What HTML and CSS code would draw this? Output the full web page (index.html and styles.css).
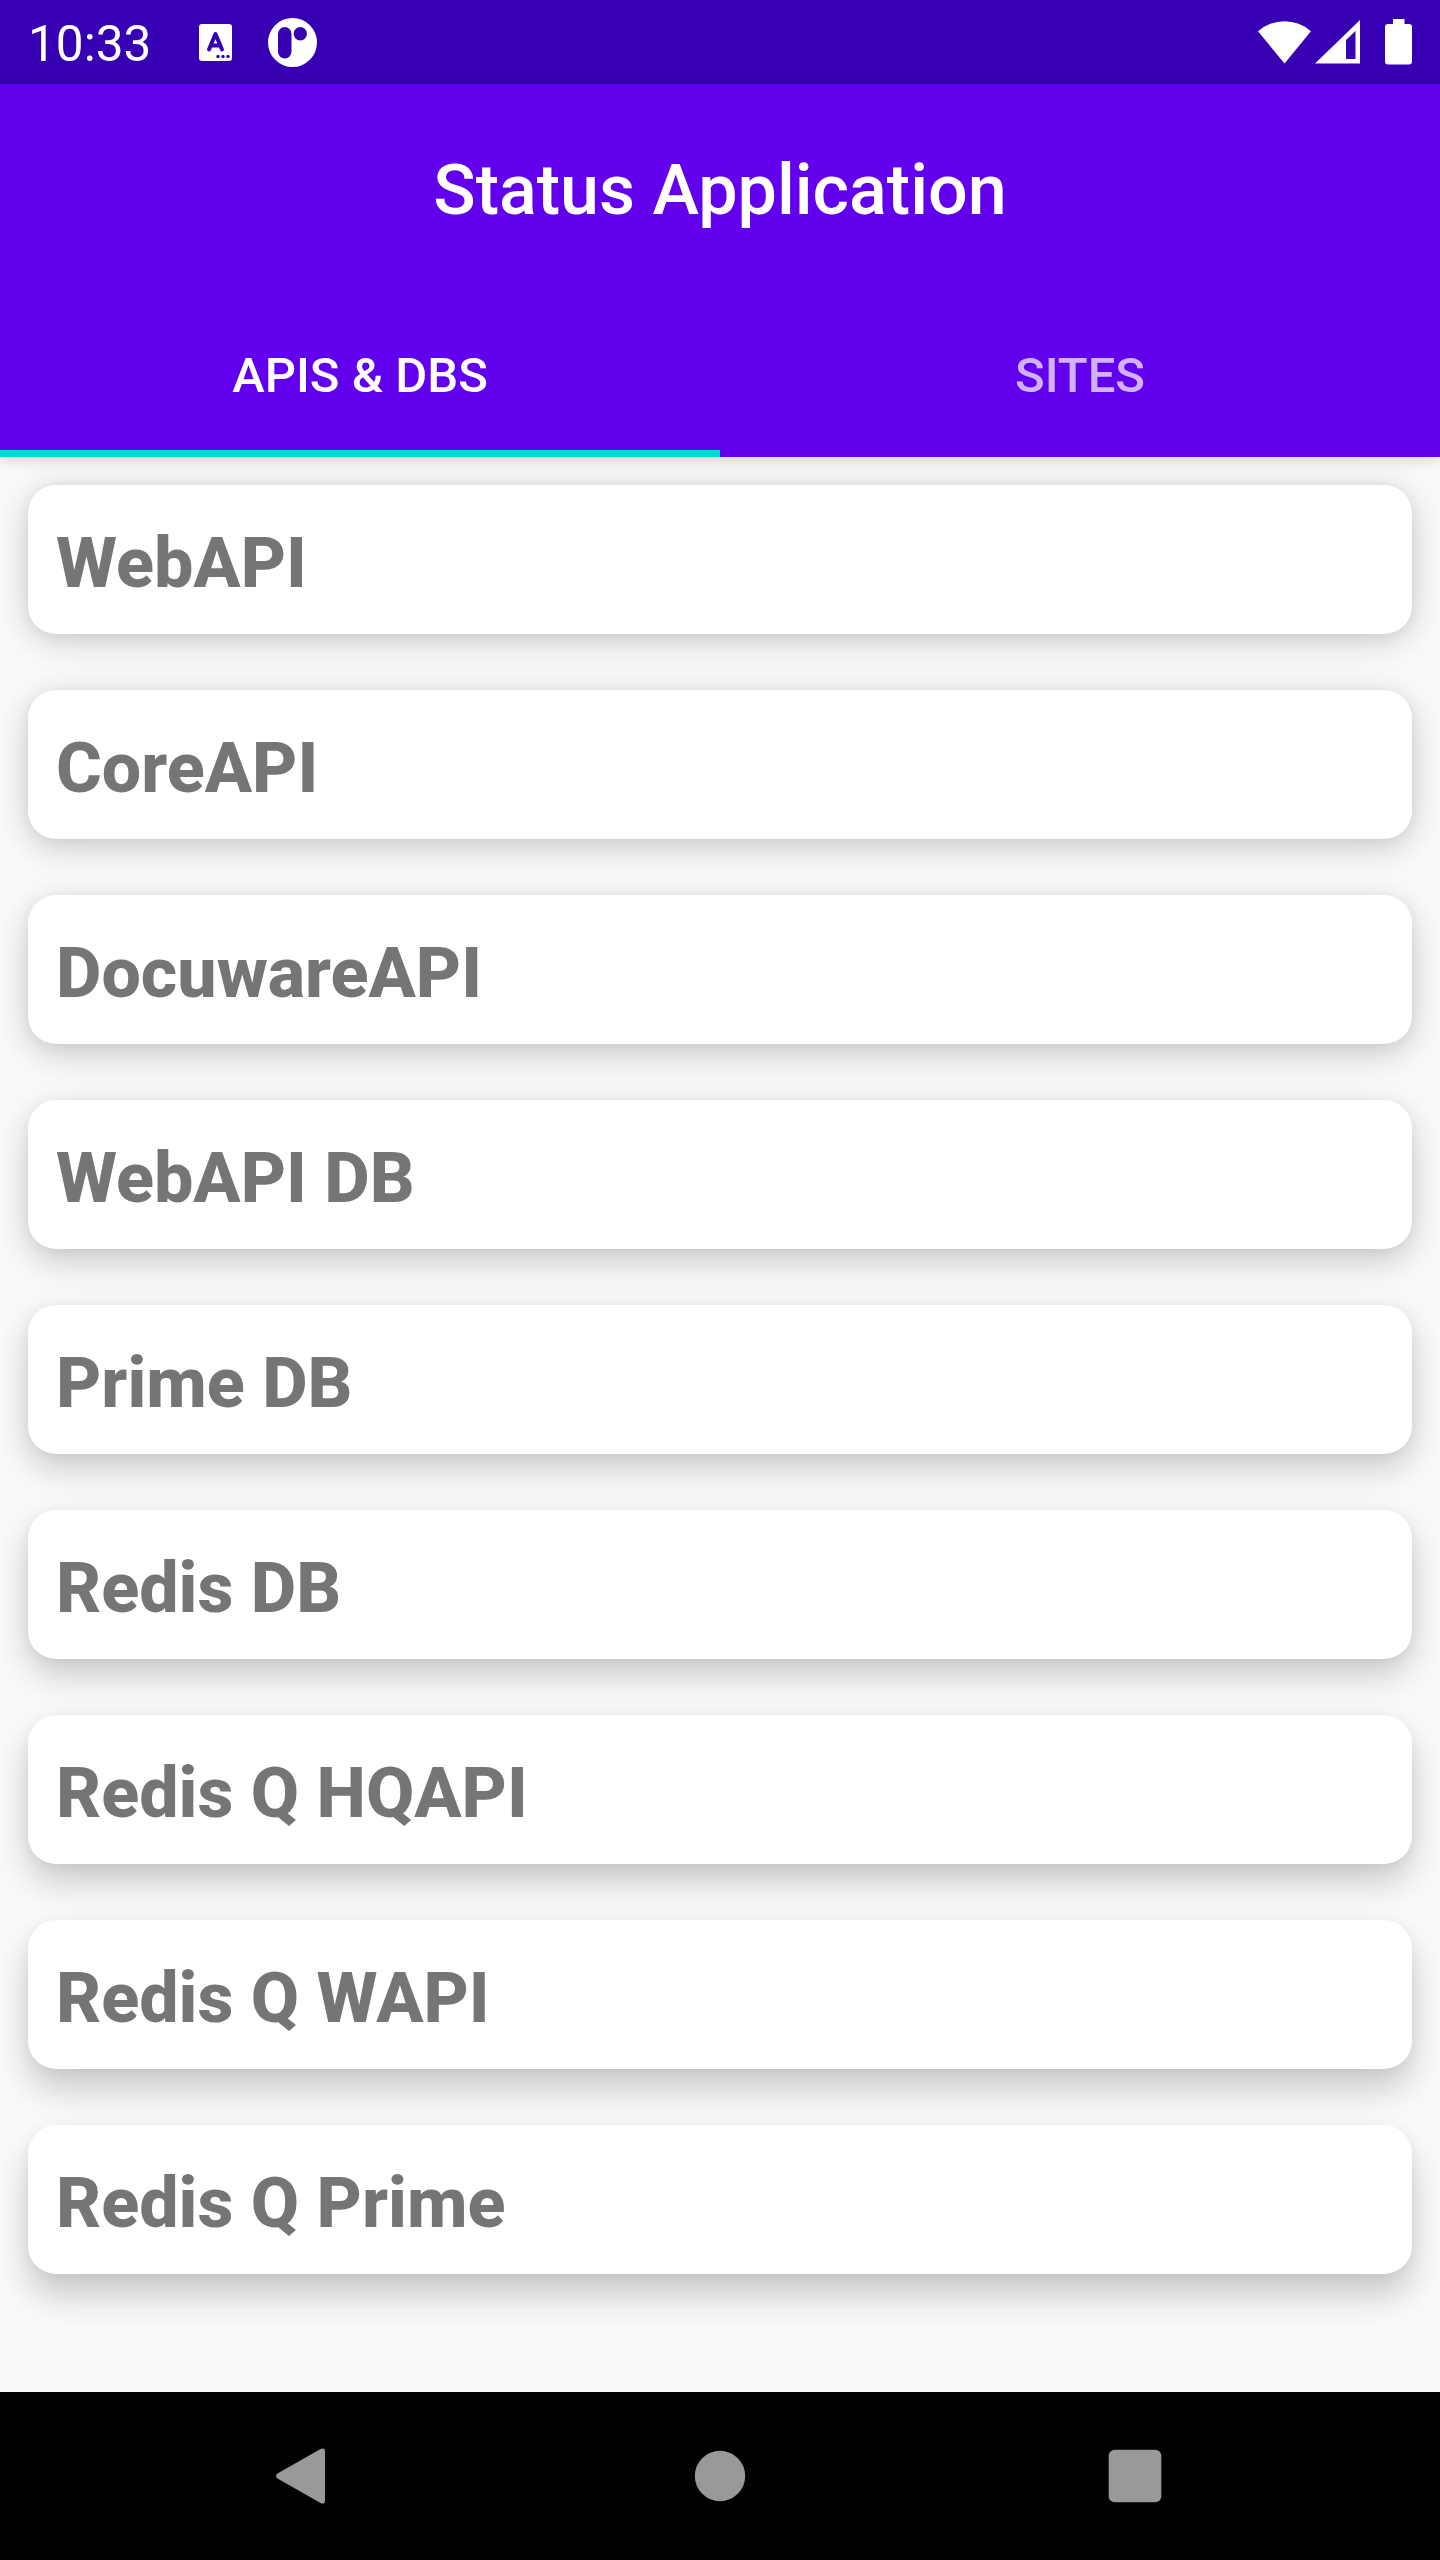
FILE: index.html
```html
<!DOCTYPE html>
<html lang="en">
<head>
<meta charset="utf-8">
<title>Status Application</title>
<link rel="stylesheet" href="styles.css">
</head>
<body>
<div class="screen">
  <div class="status-bar">
    <span class="clock">10:33</span>
    <svg class="ico-lang" width="33" height="37" viewBox="0 0 33 37">
      <rect width="33" height="37" rx="3" fill="#fff"/>
      <path d="M10 25.500L16.500 10L23 25.500M12 21.500H21" fill="none" stroke="#3700b3" stroke-width="4" stroke-linecap="round" stroke-linejoin="round"/>
      <g fill="#3700b3"><circle cx="19" cy="32.500" r="1.700"/><circle cx="24" cy="32.500" r="1.700"/><circle cx="29" cy="32.500" r="1.700"/></g>
    </svg>
    <svg class="ico-app" width="49" height="49" viewBox="0 0 49 49">
      <circle cx="24.500" cy="24.500" r="24.500" fill="#fff"/>
      <rect x="10" y="9" width="13.500" height="31.500" rx="6.750" fill="#3700b3"/>
      <circle cx="32.300" cy="15.700" r="6.700" fill="#3700b3"/>
    </svg>
    <svg class="ico-system" width="154" height="46" viewBox="0 0 154 46" fill="#fff">
      <path d="M0 12.300A40 40 0 0 1 53 12.300L26.500 44.500Z"/>
      <path fill-rule="evenodd" d="M57 44.500L102 1V44.500ZM88 40H97.500V12L88 21Z"/>
      <path d="M135 0h11.500v5h4.500a3 3 0 0 1 3 3v34.500a3 3 0 0 1-3 3h-21a3 3 0 0 1-3-3v-34.500a3 3 0 0 1 3-3h5z"/>
    </svg>
  </div>
  <header class="app-bar">
    <h1 class="title">Status Application</h1>
    <nav class="tabs">
      <div class="tab tab-active">APIS &amp; DBS</div>
      <div class="tab">SITES</div>
    </nav>
  </header>
  <main class="list">
    <div class="card" style="--drop:6px">WebAPI</div>
    <div class="card" style="--drop:8px">CoreAPI</div>
    <div class="card" style="--drop:10px">DocuwareAPI</div>
    <div class="card" style="--drop:12px">WebAPI DB</div>
    <div class="card" style="--drop:14px">Prime DB</div>
    <div class="card" style="--drop:16px">Redis DB</div>
    <div class="card" style="--drop:18px">Redis Q HQAPI</div>
    <div class="card" style="--drop:20px">Redis Q WAPI</div>
    <div class="card" style="--drop:22px">Redis Q Prime</div>
  </main>
  <div class="nav-bar">
    <svg width="56" height="58" viewBox="0 0 56 58"><path d="M48.500 2Q53 0 53 4.500V53.500Q53 58 48.500 56L5.500 31.500Q2.500 29 5.500 26.500Z" fill="#999"/></svg>
    <svg class="home" width="52" height="52" viewBox="0 0 52 52"><circle cx="26" cy="26" r="25.200" fill="#999"/></svg>
    <svg width="54" height="54" viewBox="0 0 54 54"><rect x=".7" y=".7" width="52.600" height="52.600" rx="6" fill="#999"/></svg>
  </div>
</div>
</body>
</html>
```
FILE: styles.css
```css
* { box-sizing: border-box; }
body { margin: 0; font-family: Roboto, sans-serif; }
.screen {
  width: 1440px;
  height: 2560px;
  display: flex;
  flex-direction: column;
  background: #fafafa;
  overflow: hidden;
}
.status-bar {
  height: 84px;
  flex: none;
  display: flex;
  align-items: flex-start;
  padding: 0 28px;
  background: #3700b3;
  color: #fff;
}
.clock { width: 171px; font-size: 49.5px; line-height: 57px; padding-top: 16px; }
.ico-lang { margin-top: 24px; }
.ico-app { margin: 18px 0 0 36px; }
.ico-system { margin: 19px 0 0 auto; }
.app-bar {
  position: relative;
  z-index: 1;
  height: 373px;
  flex: none;
  display: flex;
  flex-direction: column;
  background: #6200ee;
  color: #fff;
  box-shadow: 0 3px 14px rgba(0, 0, 0, .16);
}
.title {
  margin: 0;
  height: 205px;
  padding-top: 65px;
  font-size: 70px;
  line-height: 82px;
  font-weight: 500;
  text-align: center;
}
.tabs { display: grid; grid-template-columns: 1fr 1fr; height: 168px; }
.tab {
  padding-top: 58px;
  font-size: 49px;
  line-height: 57px;
  font-weight: 500;
  text-align: center;
  color: rgba(255, 255, 255, .7);
}
.tab-active { color: #fff; border-bottom: 7px solid #03dac5; }
.list {
  flex: 1;
  display: flex;
  flex-direction: column;
  gap: 56px;
  padding: 28px;
}
.card {
  height: 149px;
  flex: none;
  padding: 37px 28px 0;
  border-radius: 28px;
  background: #fff;
  color: #757575;
  font-size: 70px;
  line-height: 82px;
  font-weight: 850;
  box-shadow: 0 var(--drop) 36px rgba(0, 0, 0, .2), 0 2px 12px rgba(0, 0, 0, .05);
}
.nav-bar {
  position: relative;
  height: 168px;
  flex: none;
  display: flex;
  align-items: center;
  justify-content: space-between;
  padding: 0 278px 0 272px;
  background: #000;
}
.home { margin-left: 4px; }
```
